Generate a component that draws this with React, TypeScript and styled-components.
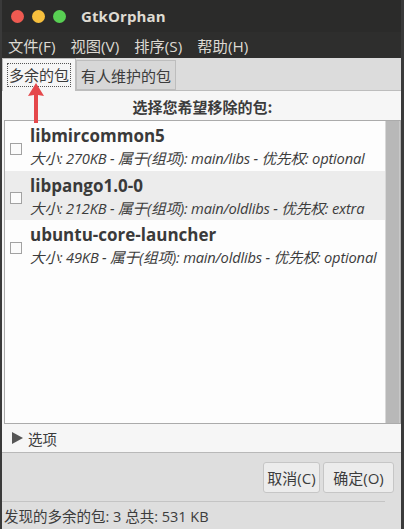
import React from "react";
import styled, { createGlobalStyle } from "styled-components";

const Global = createGlobalStyle`
  html, body { margin: 0; padding: 0; background: #2b2b2b; }
  body { font-family: "Open Sans", "Noto Sans CJK SC", sans-serif; }
`;

const Win = styled.div`
  position: relative;
  width: 404px;
  height: 529px;
  display: flex;
  flex-direction: column;
  background: #dedede;
  border-left: 2px solid #3a3a3a;
  border-right: 3px solid #3a3a3a;
  box-sizing: border-box;
  overflow: hidden;
`;

const TitleBar = styled.div`
  height: 32px;
  flex: none;
  background: #2b2b2a;
  display: flex;
  align-items: center;
  padding-left: 11px;
  gap: 8px;
  margin: 0 -3px 0 -2px;
`;

const Light = styled.span<{ $c: string }>`
  width: 13px;
  height: 13px;
  border-radius: 50%;
  background: ${(p) => p.$c};
`;

const Title = styled.span`
  margin-left: 7px;
  color: #dfdbd2;
  font-family: "Open Sans", sans-serif;
  font-weight: 700;
  font-size: 15px;
  letter-spacing: 0.1px;
`;

const MenuBar = styled.div`
  height: 26px;
  flex: none;
  background: #2e2e2d;
  display: flex;
  align-items: center;
  padding-left: 8px;
  gap: 15px;
  margin: 0 -3px 0 -2px;
`;

const MenuItem = styled.span`
  color: #dcd9d2;
  font-family: "Open Sans", "Noto Sans CJK SC", sans-serif;
  font-size: 15.3px;
`;

const TabStrip = styled.div`
  height: 32px;
  flex: none;
  display: flex;
  align-items: flex-end;
  background: #dcdcdc;
`;

const Tab = styled.div<{ $active?: boolean }>`
  height: ${(p) => (p.$active ? 33 : 30)}px;
  box-sizing: border-box;
  display: flex;
  align-items: center;
  padding: 0 4px;
  background: ${(p) => (p.$active ? "#f6f6f6" : "#d7d7d7")};
  border: 1px solid #bdbdbd;
  border-bottom: ${(p) => (p.$active ? "none" : "1px solid #bdbdbd")};
  margin-bottom: ${(p) => (p.$active ? -1 : 0)}px;
  position: relative;
  z-index: ${(p) => (p.$active ? 2 : 1)};
  font-family: "Noto Sans CJK SC", sans-serif;
  font-size: 15px;
  color: #3c3c3c;
`;

const Focus = styled.span`
  border: 1px dotted #555;
  padding: 1px 1px;
  line-height: 20px;
`;

const Panel = styled.div`
  height: 363px;
  flex: none;
  box-sizing: border-box;
  background: #f6f6f6;
  border-top: 1px solid #bdbdbd;
  border-bottom: 1px solid #b8b8b8;
  display: flex;
  flex-direction: column;
  padding: 0 0 0 2px;
`;

const Heading = styled.div`
  height: 31px;
  display: flex;
  align-items: center;
  justify-content: center;
  padding-top: 2px;
  box-sizing: border-box;
  font-family: "Noto Sans CJK SC", sans-serif;
  font-weight: 700;
  font-size: 15px;
  color: #3c3c3c;
`;

const ListFrame = styled.div`
  height: 302px;
  flex: none;
  display: flex;
  border: 1px solid #ababab;
  background: #fdfdfd;
`;

const List = styled.div`
  flex: 1;
  display: flex;
  flex-direction: column;
  overflow: hidden;
`;

const Row = styled.div<{ $alt?: boolean }>`
  height: 49.5px;
  display: flex;
  align-items: center;
  background: ${(p) => (p.$alt ? "#ececec" : "#fdfdfd")};
`;

const Check = styled.span`
  width: 10px;
  height: 10px;
  border: 1px solid #a2a2a2;
  background: #fbfbfb;
  margin: 6px 8px 0 5px;
  flex: none;
`;

const RowText = styled.div`
  display: flex;
  flex-direction: column;
  padding-top: 3px;
`;

const Name = styled.div`
  font-family: "Open Sans", sans-serif;
  font-weight: 700;
  font-size: 17px;
  line-height: 22px;
  color: #3a3a3a;
`;

const Sub = styled.div`
  font-family: "Open Sans", "Noto Sans CJK SC", sans-serif;
  font-style: italic;
  font-size: 14.7px;
  line-height: 22px;
  color: #3c3c3c;
  letter-spacing: -0.2px;
  white-space: nowrap;
`;

const Scroll = styled.div`
  width: 13px;
  flex: none;
  background: #b8b8b8;
  border-left: 1px solid #d8d8d8;
  border-right: 1px solid #c8c8c8;
`;

const Expander = styled.div`
  height: 30px;
  display: flex;
  align-items: center;
  gap: 5px;
  padding-left: 8px;
  font-family: "Noto Sans CJK SC", sans-serif;
  font-size: 14.5px;
  color: #3c3c3c;
`;

const Tri = styled.span`
  width: 0;
  height: 0;
  border-top: 6px solid transparent;
  border-bottom: 6px solid transparent;
  border-left: 11px solid #555;
`;

const ButtonBar = styled.div`
  height: 47px;
  flex: none;
  display: flex;
  justify-content: flex-end;
  align-items: center;
  gap: 3px;
  padding-right: 7px;
  padding-top: 1px;
`;

const Separator = styled.div`
  height: 1px;
  flex: none;
  background: #c4c4c4;
  margin-right: 16px;
`;

const Btn = styled.button<{ $w: number }>`
  width: ${(p) => p.$w}px;
  height: 31px;
  box-sizing: border-box;
  background: #ececec;
  border: 1px solid #c6c6c6;
  border-radius: 3px;
  font-family: "Open Sans", "Noto Sans CJK SC", sans-serif;
  font-size: 15px;
  color: #3c3c3c;
  padding: 0;
`;

const Status = styled.div`
  flex: 1;
  display: flex;
  align-items: center;
  padding-left: 2px;
  font-family: "Open Sans", "Noto Sans CJK SC", sans-serif;
  font-size: 14.5px;
  color: #3c3c3c;
`;

const Arrow = styled.svg`
  position: absolute;
  left: 25px;
  top: 83px;
  z-index: 10;
`;

const rows = [
  { name: "libmircommon5", sub: "大小: 270KB - 属于(组项): main/libs - 优先权: optional" },
  { name: "libpango1.0-0", sub: "大小: 212KB - 属于(组项): main/oldlibs - 优先权: extra" },
  { name: "ubuntu-core-launcher", sub: "大小: 49KB - 属于(组项): main/oldlibs - 优先权: optional" },
];

export default function App() {
  return (
    <>
      <Global />
      <Win>
        <TitleBar>
          <Light $c="#ee5a51" />
          <Light $c="#f6bf3d" />
          <Light $c="#58cf53" />
          <Title>GtkOrphan</Title>
        </TitleBar>
        <MenuBar>
          <MenuItem>文件(F)</MenuItem>
          <MenuItem>视图(V)</MenuItem>
          <MenuItem>排序(S)</MenuItem>
          <MenuItem>帮助(H)</MenuItem>
        </MenuBar>
        <TabStrip>
          <Tab $active>
            <Focus>多余的包</Focus>
          </Tab>
          <Tab>有人维护的包</Tab>
        </TabStrip>
        <Panel>
          <Heading>选择您希望移除的包:</Heading>
          <ListFrame>
            <List>
              {rows.map((r, i) => (
                <Row key={r.name} $alt={i === 1}>
                  <Check />
                  <RowText>
                    <Name>{r.name}</Name>
                    <Sub>{r.sub}</Sub>
                  </RowText>
                </Row>
              ))}
            </List>
            <Scroll />
          </ListFrame>
          <Expander>
            <Tri />
            选项
          </Expander>
        </Panel>
        <ButtonBar>
          <Btn $w={57}>取消(C)</Btn>
          <Btn $w={71}>确定(O)</Btn>
        </ButtonBar>
        <Separator />
        <Status>发现的多余的包: 3 总共: 531 KB</Status>
        <Arrow width="18" height="40" viewBox="0 0 18 40">
          <polygon points="9,0 17,13 11,12 11,40 7,40 7,12 1,13" fill="#e5484b" />
        </Arrow>
      </Win>
    </>
  );
}
